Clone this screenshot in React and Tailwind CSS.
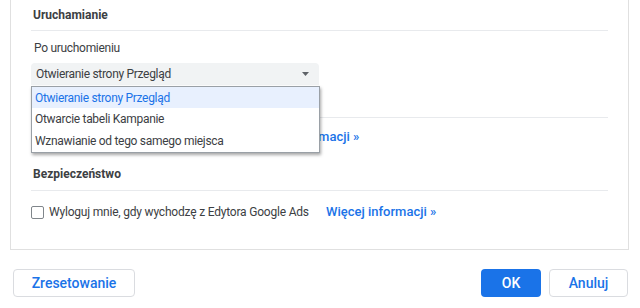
import React from 'react';

const font = { fontFamily: 'Roboto, "Noto Sans", Arial, sans-serif' };

function Link({ children }) {
  return <span className="text-[13px] font-medium text-[#1a73e8] whitespace-nowrap">{children}</span>;
}

export default function App() {
  return (
    <div className="w-[640px] h-[308px] bg-white text-[#3c4043] flex flex-col" style={font}>
      <div className="ml-[10px] mr-[11px] h-[250px] border border-t-0 border-[#e0e0e0] bg-white pl-[20px] pr-[20px] flex flex-col">
        <div className="h-[31px] flex items-center pl-[2px] border-b border-[#e8eaed] text-[12px] font-bold shrink-0">
          Uruchamianie
        </div>
        <div className="h-[32px] flex items-center pl-[3px] pt-[1px] text-[12px] tracking-[-0.3px] shrink-0">Po uruchomieniu</div>
        <div className="relative w-[288px] shrink-0">
          <div className="h-[22px] bg-[#f1f3f4] rounded-t-[4px] flex items-center justify-between pl-[5px] pr-[10px] text-[12px] tracking-[-0.3px]">
            <span>Otwieranie strony Przegląd</span>
            <svg width="7" height="4" viewBox="0 0 7 4"><path d="M0 0h7L3.5 4z" fill="#5f6368" /></svg>
          </div>
          <div className="absolute left-0 top-[23px] w-[289px] bg-white border border-[#9aa0a6] shadow-[1px_2px_3px_rgba(0,0,0,0.35)] z-10 text-[12px] tracking-[-0.3px]">
            <div className="h-[21px] flex items-center pl-[3px] bg-[#e8f0fe] text-[#1a73e8]">Otwieranie strony Przegląd</div>
            <div className="h-[22px] flex items-center pl-[3px]">Otwarcie tabeli Kampanie</div>
            <div className="h-[22px] flex items-center pl-[3px]">Wznawianie od tego samego miejsca</div>
          </div>
        </div>
        <div className="h-[33px] border-b border-[#e8eaed] shrink-0" />
        <div className="h-[38px] flex items-center pl-[218px] shrink-0">
          <Link>Więcej informacji »</Link>
        </div>
        <div className="h-[35px] flex items-center pl-[2px] pt-[2px] border-b border-[#e8eaed] text-[12px] font-bold shrink-0">
          Bezpieczeństwo
        </div>
        <div className="h-[42px] flex items-center shrink-0">
          <span className="w-[13px] h-[13px] border-[1.5px] border-[#80868b] rounded-[2px] mr-[5px]" />
          <span className="text-[12px] tracking-[-0.2px] w-[277px] whitespace-nowrap">Wyloguj mnie, gdy wychodzę z Edytora Google Ads</span>
          <Link>Więcej informacji »</Link>
        </div>
      </div>
      <div className="flex items-center justify-between pl-[13px] pr-[12px] pt-[19px]">
        <button className="w-[122px] h-[28px] rounded-[4px] border border-[#dadce0] bg-white text-[14px] font-medium text-[#1a73e8]">
          Zresetowanie
        </button>
        <div className="flex gap-[8px]">
          <button className="w-[60px] h-[28px] rounded-[4px] bg-[#1a73e8] text-[14px] font-medium text-white">OK</button>
          <button className="w-[79px] h-[28px] rounded-[4px] border border-[#dadce0] bg-white text-[14px] font-medium text-[#1a73e8]">
            Anuluj
          </button>
        </div>
      </div>
    </div>
  );
}
